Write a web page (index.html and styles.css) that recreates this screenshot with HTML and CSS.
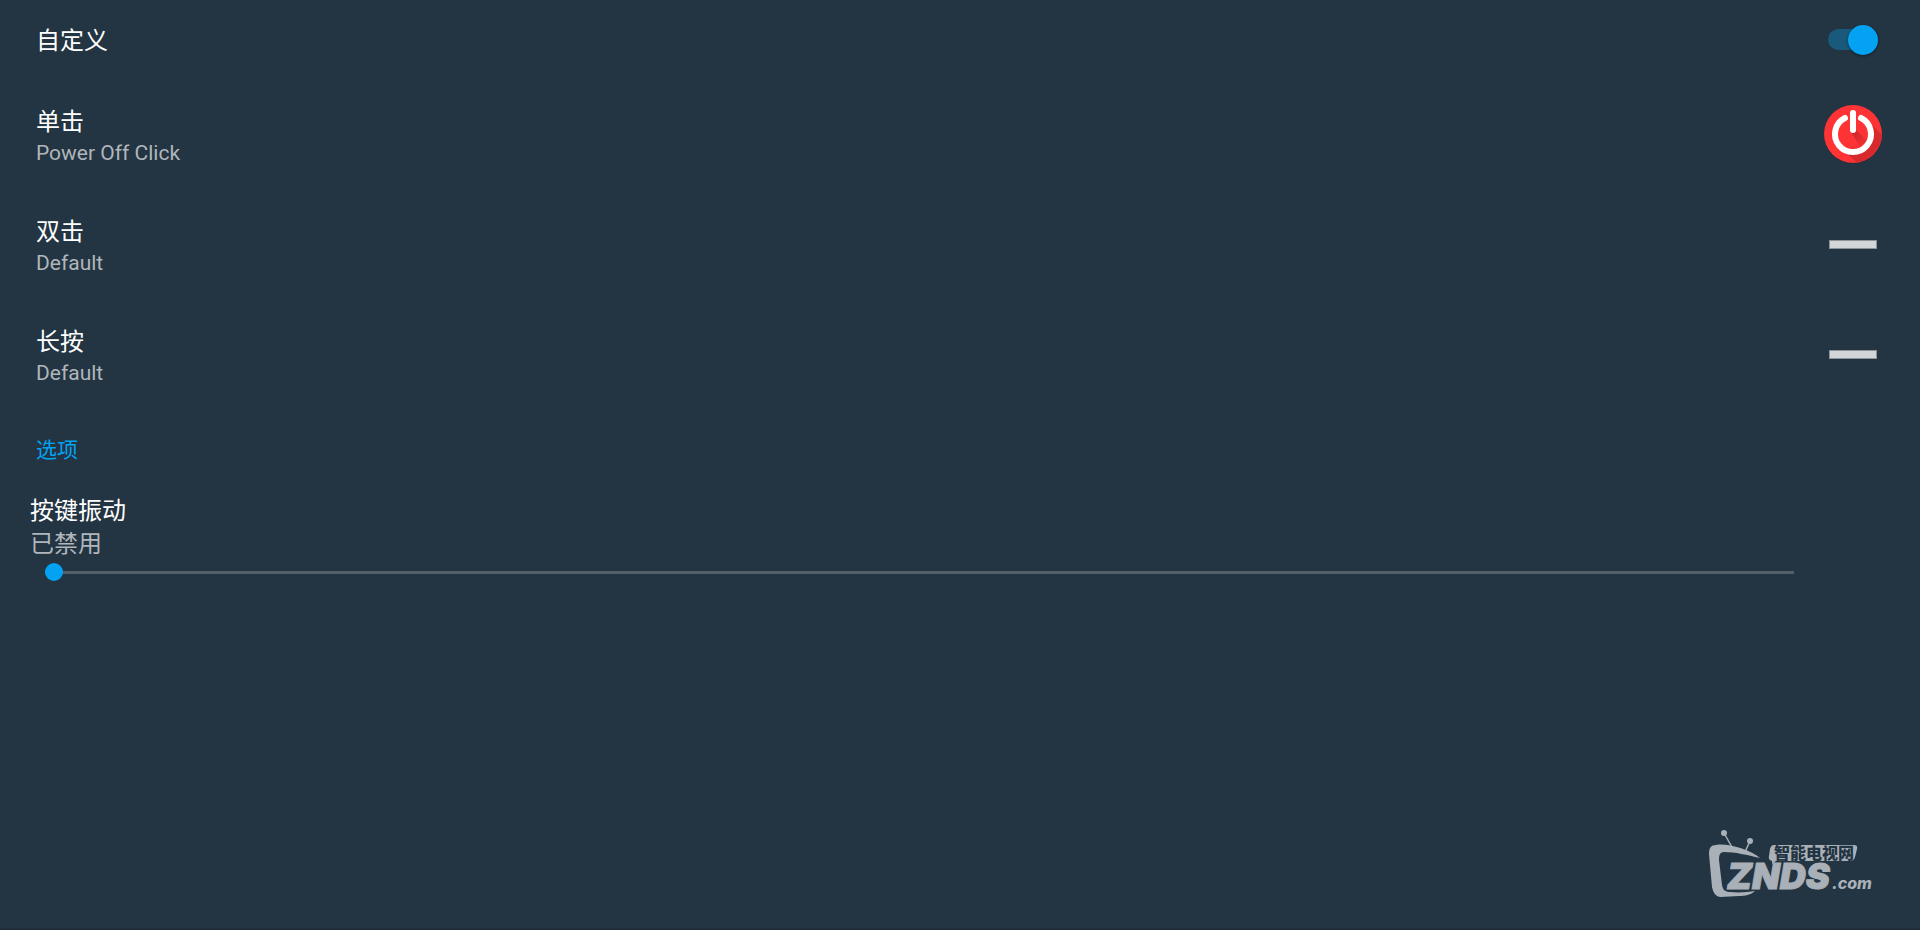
FILE: index.html
```html
<!DOCTYPE html>
<html lang="zh-CN">
<head>
    <meta charset="UTF-8">
    <meta name="viewport" content="width=device-width, initial-scale=1.0">
    <title>自定义</title>
    <link rel="stylesheet" href="styles.css">
</head>
<body>
    <main class="settings">
        <label class="row row-toggle">
            <span class="title">自定义</span>
            <input type="checkbox" class="switch" role="switch" checked>
        </label>

        <button type="button" class="row">
            <span class="text">
                <span class="title">单击</span>
                <span class="summary">Power Off Click</span>
            </span>
            <svg class="icon" viewBox="0 0 60 60" aria-hidden="true">
                <defs>
                    <clipPath id="disc"><circle cx="30" cy="30" r="29"/></clipPath>
                    <linearGradient id="shade" x1="0" y1="0" x2="1" y2="1">
                        <stop offset="0" stop-color="#c9252a"/>
                        <stop offset="1" stop-color="#e02c2f"/>
                    </linearGradient>
                    <linearGradient id="shade-bar" x1="0.2" y1="0" x2="0.8" y2="1">
                        <stop offset="0" stop-color="#c9252a"/>
                        <stop offset="1" stop-color="#f83235"/>
                    </linearGradient>
                </defs>
                <circle cx="30" cy="31" r="29" fill="#1b2a35" opacity="0.6"/>
                <circle cx="30" cy="30" r="29" fill="#fd3335"/>
                <g clip-path="url(#disc)">
                    <path d="M40 12 L66 38 L60 66 L42 66 L17 43 L30 48 L46 38 Z" fill="url(#shade)"/>
                    <circle cx="30" cy="30" r="16" fill="#fd3335"/>
                    <path d="M32 25 L45 38 L38 44 L28 28 Z" fill="url(#shade-bar)"/>
                </g>
                <path d="M22 14 A18 18 0 1 0 38 14" fill="none" stroke="#fff" stroke-width="6" stroke-linecap="round"/>
                <path d="M30 9 V26" stroke="#fff" stroke-width="6" stroke-linecap="round"/>
            </svg>
        </button>

        <button type="button" class="row">
            <span class="text">
                <span class="title">双击</span>
                <span class="summary">Default</span>
            </span>
            <span class="dash"></span>
        </button>

        <button type="button" class="row">
            <span class="text">
                <span class="title">长按</span>
                <span class="summary">Default</span>
            </span>
            <span class="dash"></span>
        </button>

        <h2 class="category">选项</h2>

        <div class="vibration">
            <label class="title" for="vibration">按键振动</label>
            <span class="state">已禁用</span>
            <input type="range" class="slider" id="vibration" min="0" max="100" value="0">
        </div>
    </main>

    <svg class="watermark" viewBox="0 0 170 72" role="img" aria-label="智能电视网 ZNDS.com">
        <g fill="#a9b0b8">
            <circle cx="16" cy="5" r="3"/>
            <circle cx="42" cy="13" r="3"/>
            <path d="M16 5 L25 21 M42 13 L37 24" stroke="#a9b0b8" stroke-width="1.5"/>
            <path d="M8 17 C19 15 41 21 52 30 C39 27 27 24 16 24 C12 24 11 27 11 32 L14 57 C15 62 17 64 22 64 C31 65 40 64 47 63 C43 67 37 68 31 68 L12 69 C7 68 5 64 4 59 L1 26 C1 20 3 17 8 17 Z"/>
            <path d="M66 17 H146 Q150 17 149 21 L147 29 Q146 33 142 33 H68 L64 36 L64 33 Q60 32 61 28 L62 21 Q63 17 66 17 Z"/>
        </g>
        <text class="logo-cn" x="66" y="31">智能电视网</text>
        <text class="logo-name" x="19" y="61">ZNDS</text>
        <text class="logo-com" x="124" y="61">.com</text>
    </svg>
</body>
</html>
```

FILE: styles.css
```css
* {
    box-sizing: border-box;
}
body {
    margin: 0;
    min-height: 100vh;
    display: flex;
    flex-direction: column;
    justify-content: space-between;
    background-color: #233442;
    border-bottom: 2px solid #1f2c3a;
    color: #fff;
    font-family: Roboto, "Noto Sans CJK SC", sans-serif;
}
.settings {
    display: flex;
    flex-direction: column;
}
.row {
    display: flex;
    align-items: center;
    justify-content: space-between;
    width: 100%;
    height: 110px;
    padding: 0 37px 0 36px;
    border: none;
    background: none;
    color: inherit;
    font: inherit;
    text-align: left;
    cursor: pointer;
}
.row-toggle {
    height: 79px;
}
.text {
    display: flex;
    flex-direction: column;
    padding-top: 6px;
}
.title {
    font-size: 24px;
    line-height: 32px;
}
.row-toggle .title {
    padding-top: 2px;
}
.summary {
    color: #b0b6bb;
    font-size: 21px;
    line-height: 30px;
}
.switch {
    appearance: none;
    display: flex;
    align-items: center;
    justify-content: flex-end;
    width: 50px;
    height: 21px;
    margin: 0 5px 0 0;
    border-radius: 11px;
    background-color: #19597b;
    cursor: pointer;
}
.switch::before {
    content: "";
    flex: none;
    width: 30px;
    height: 30px;
    border-radius: 50%;
    background-color: #03a2f2;
    box-shadow: 0 1px 3px rgba(0, 0, 0, 0.4);
}
.switch:not(:checked) {
    justify-content: flex-start;
}
.icon {
    width: 60px;
    height: 60px;
}
.dash {
    width: 48px;
    height: 9px;
    margin-right: 6px;
    background-color: #d3d6d9;
    border: 1px solid #8b949b;
}
.category {
    margin: 25px 36px 24px;
    color: #03a2f2;
    font-size: 21px;
    font-weight: 400;
    line-height: 32px;
}
.vibration {
    display: flex;
    flex-direction: column;
    padding: 5px 126px 0 30px;
}
.state {
    color: #b0b6bb;
    font-size: 24px;
    line-height: 34px;
}
.slider {
    appearance: none;
    height: 20px;
    margin: 1px 0 0 15px;
    background: linear-gradient(#53606b, #53606b) center / 100% 3px no-repeat;
    cursor: pointer;
}
.slider::-webkit-slider-thumb {
    appearance: none;
    width: 18px;
    height: 18px;
    border-radius: 50%;
    background-color: #03a2f2;
}
.watermark {
    align-self: flex-end;
    width: 170px;
    height: 72px;
    margin: 0 42px 28px 0;
}
.logo-cn {
    fill: #233442;
    font-family: "Noto Sans CJK SC", sans-serif;
    font-size: 16px;
    font-weight: 900;
}
.logo-name {
    fill: #a9b0b8;
    stroke: #a9b0b8;
    stroke-width: 1px;
    font-family: Inter, sans-serif;
    font-size: 36px;
    font-weight: 900;
    font-style: italic;
}
.logo-com {
    fill: #a9b0b8;
    font-family: Inter, sans-serif;
    font-size: 16px;
    font-weight: 800;
    font-style: italic;
}
```
